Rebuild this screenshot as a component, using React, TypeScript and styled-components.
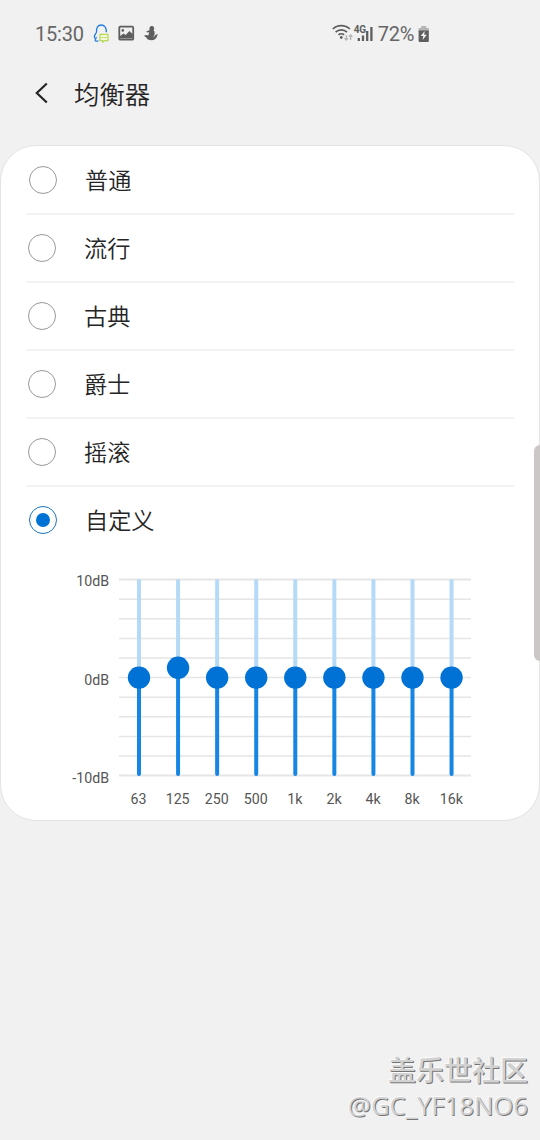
import React, { useState } from "react";
import styled, { createGlobalStyle } from "styled-components";

const GlobalStyle = createGlobalStyle`
  * {
    box-sizing: border-box;
  }
  body {
    margin: 0;
    background-color: #f1f1f1;
    font-family: Roboto, "Noto Sans CJK SC", sans-serif;
    color: #252525;
  }
`;

const Screen = styled.div`
  position: relative;
  display: flex;
  flex-direction: column;
  width: 540px;
  height: 1140px;
  overflow: hidden;
  background-color: #f1f1f1;
`;

const StatusBar = styled.div`
  display: flex;
  justify-content: space-between;
  align-items: center;
  height: 66px;
  padding: 2px 110px 0 35px;
  color: #666;
  font-size: 20px;
`;

const StatusGroup = styled.div`
  display: flex;
  align-items: center;
  height: 24px;
`;

const Clock = styled.span`
  width: 57.4px;
  letter-spacing: -0.2px;
`;

const Battery = styled.span`
  margin: 0 4px;
  letter-spacing: -0.3px;
`;

const Header = styled.header`
  display: flex;
  align-items: center;
  height: 79px;
  padding: 0 0 25px 33px;
`;

const BackButton = styled.button`
  display: flex;
  width: 41px;
  padding: 0;
  border: none;
  background: none;
  cursor: pointer;
`;

const Title = styled.h1`
  margin: 0;
  font-family: "Noto Sans CJK SC DemiLight", "Noto Sans CJK SC", sans-serif;
  font-size: 25.4px;
  font-weight: 350;
  line-height: 36px;
`;

const Card = styled.main`
  height: 676px;
  border: 1px solid #e3e3e3;
  border-radius: 36px;
  background-color: white;
`;

const PresetList = styled.div`
  padding: 1px 25px 0;
`;

const Preset = styled.button`
  display: flex;
  align-items: center;
  width: 100%;
  height: 68px;
  padding: 0 0 0 2px;
  border: none;
  border-bottom: 2px solid #f2f2f2;
  background: none;
  color: inherit;
  font-family: "Noto Sans CJK SC DemiLight", "Noto Sans CJK SC", sans-serif;
  font-size: 23.2px;
  font-weight: 350;
  cursor: pointer;

  &:first-child,
  &:last-child {
    padding-left: 3px;
  }
  &:last-child {
    border-color: transparent;
  }
`;

const PresetName = styled.span`
  padding-bottom: 2px;
`;

const Radio = styled.span<{ $checked: boolean }>`
  display: flex;
  align-items: center;
  justify-content: center;
  width: 28px;
  height: 28px;
  margin-right: 28px;
  border: 1.5px solid ${(props) => (props.$checked ? "#1a75bf" : "#999")};
  border-radius: 50%;

  &::after {
    content: "";
    width: 14px;
    height: 14px;
    border-radius: 50%;
    background-color: ${(props) => (props.$checked ? "#0072d6" : "transparent")};
  }
`;

const Equalizer = styled.section`
  display: grid;
  grid-template-columns: 108px 352px;
  column-gap: 10px;
  padding-top: 14px;
  color: #555;
  font-size: 14.2px;
`;

const Levels = styled.div`
  display: flex;
  flex-direction: column;
  justify-content: space-between;
  height: 213px;
  margin-top: 4px;
  text-align: right;
  line-height: 16px;
`;

const Chart = styled.svg`
  display: block;
`;

const Bands = styled.div`
  display: grid;
  grid-column: 2;
  grid-template-columns: repeat(9, 39.1px);
  line-height: 16px;
  margin-top: 5px;
  text-align: center;
`;

const ScrollHandle = styled.div`
  position: absolute;
  top: 445px;
  right: 0;
  width: 6px;
  height: 216px;
  border-radius: 6px 0 0 6px;
  background-color: #cbc7c7;
`;

const Watermark = styled.div`
  position: absolute;
  right: 12px;
  bottom: 17px;
  color: #d2d2d2;
  text-align: right;
  text-shadow: 1px 1px 0 #757575, -1px -1px 0 #fafafa;
`;

const Community = styled.div`
  font-family: "Noto Sans CJK SC", sans-serif;
  font-size: 28px;
  font-weight: 500;
  line-height: 40px;
`;

const Author = styled.div`
  font-family: "Open Sans", sans-serif;
  font-size: 25.7px;
  line-height: 34px;
`;

const presets = ["普通", "流行", "古典", "爵士", "摇滚", "自定义"];

const bands = [
  { label: "63", gain: 0 },
  { label: "125", gain: 1 },
  { label: "250", gain: 0 },
  { label: "500", gain: 0 },
  { label: "1k", gain: 0 },
  { label: "2k", gain: 0 },
  { label: "4k", gain: 0 },
  { label: "8k", gain: 0 },
  { label: "16k", gain: 0 },
];

const gridLines = [10, 8, 6, 4, 2, 0, -2, -4, -6, -8, -10];

const toY = (gain: number) => 108.6 - gain * 9.8;

const NotificationIcons = () => (
  <svg width="68" height="24" viewBox="0 0 68 24">
    <path
      d="M6.5 18.7c-1.5.8-3.8.5-3.3-1l.8-1.7c-1.2.5-2.2-.4-1.4-2.4l1.9-3.4C4.1 5.5 6 3 9.2 3s5.4 2.5 5.2 7.2"
      fill="none"
      stroke="#267de0"
      strokeWidth="1.3"
    />
    <path
      d="M8 12.4h8v6.2h-3.5l-1.7 1.6v-1.6H8z"
      fill="#f2f8d8"
      stroke="#b8d85a"
      strokeWidth="1.3"
      strokeLinejoin="round"
    />
    <path d="M9.6 15.5h1m1 0h1m1 0h1" stroke="#9bc52b" strokeWidth="1.2" />
    <rect x="27.3" y="4.7" width="13.9" height="13" rx="1" fill="none" stroke="#5e5e5e" strokeWidth="1.8" />
    <circle cx="30.8" cy="8.4" r="1.3" fill="#5e5e5e" />
    <path d="M27.9 16.5v-2.3l3.5-2.7 2.3 1.5 3.7-4 3.4 3.2v4.3z" fill="#5e5e5e" />
    <circle cx="59.8" cy="6.4" r="2.4" fill="#5e5e5e" />
    <path
      d="M57.8 7.5c-1 1.2-2 1.6-3.5 1.8l.8 1.2 2.2-.2-1 3.2c-.8-.7-2.4-.8-4 .1.1 1.2 1.1 1.4 1.7 1.5.8 2.1 2.7 3.2 5.3 3.2 3.4 0 5.3-2 5.9-4.5l.6-1.7-2.8 1.1c-.5 1.3-1 1.9-1.7 2.4l1.2-3.2c.6-2-.3-3.9-1.6-4.9z"
      fill="#5e5e5e"
    />
  </svg>
);

const SignalIcons = () => (
  <svg width="42" height="24" viewBox="0 0 42 24">
    <g fill="none" stroke="#5e5e5e" strokeWidth="1.7">
      <path d="M.8 7c4.6-4.5 12.4-4.5 17 0M3.6 10.1c3-3.1 8.4-3.1 11.4 0M6.5 12.9c1.5-1.5 4.1-1.5 5.6 0" />
    </g>
    <circle cx="9.3" cy="15.5" r="1.4" fill="#5e5e5e" />
    <path d="M14.3 13v5m-1.8-1.8 1.8 2 1.8-2M18.6 18v-5m-1.8 1.8 1.8-2 1.8 2" fill="none" stroke="#b2b2b2" strokeWidth="1.2" />
    <text x="21.8" y="11.3" fill="#5e5e5e" fontSize="10" fontWeight="700" letterSpacing="-0.4">
      4G
    </text>
    <path d="M26.8 19v-3M31 19v-5.5M35.2 19V9M39.4 19V5" stroke="#5e5e5e" strokeWidth="2.3" />
  </svg>
);

const BatteryIcon = () => (
  <svg width="12" height="18" viewBox="0 0 12 18">
    <path d="M3.2 1h5v2h2.6v4H.6V3h2.6z" fill="#b5b5b5" />
    <path d="M.6 5.5h10.2V16a1 1 0 0 1-1 1H1.6a1 1 0 0 1-1-1z" fill="#5e5e5e" />
    <path d="m6.7 6-4 5h2.6l-.7 4L8.8 9.7H6.2z" fill="#f5f5f5" />
  </svg>
);

const App: React.FunctionComponent = () => {
  const [selected, setSelected] = useState("自定义");

  return (
    <>
      <GlobalStyle />
      <Screen>
        <StatusBar>
          <StatusGroup>
            <Clock>15:30</Clock>
            <NotificationIcons />
          </StatusGroup>
          <StatusGroup>
            <SignalIcons />
            <Battery>72%</Battery>
            <BatteryIcon />
          </StatusGroup>
        </StatusBar>
        <Header>
          <BackButton aria-label="返回">
            <svg width="18" height="24" viewBox="0 0 18 24">
              <path d="M13.8 2.5 3.8 12l10 9.5" fill="none" stroke="#252525" strokeWidth="2.2" />
            </svg>
          </BackButton>
          <Title>均衡器</Title>
        </Header>
        <Card>
          <PresetList>
            {presets.map((name) => (
              <Preset key={name} onClick={() => setSelected(name)}>
                <Radio $checked={selected === name} />
                <PresetName>{name}</PresetName>
              </Preset>
            ))}
          </PresetList>
          <Equalizer>
            <Levels>
              <span>10dB</span>
              <span>0dB</span>
              <span>-10dB</span>
            </Levels>
            <Chart width="352" height="216" viewBox="0 0 352 216">
              {gridLines.map((gain) => (
                <path
                  key={gain}
                  d={`M0 ${toY(gain)}h352`}
                  stroke="#e5e5e5"
                  strokeWidth={Math.abs(gain) === 10 ? 2 : 1.5}
                />
              ))}
              {bands.map(({ label, gain }, index) => {
                const x = 20 + index * 39.07;
                return (
                  <g key={label} strokeWidth="4" strokeLinecap="round">
                    <path d={`M${x} 12V${toY(gain)}`} stroke="#b5daf8" />
                    <path d={`M${x} ${toY(gain)}V205`} stroke="#1686e4" />
                    <circle cx={x} cy={toY(gain)} r="11.2" fill="#0072d6" />
                  </g>
                );
              })}
            </Chart>
            <Bands>
              {bands.map(({ label }) => (
                <span key={label}>{label}</span>
              ))}
            </Bands>
          </Equalizer>
        </Card>
        <ScrollHandle />
        <Watermark>
          <Community>盖乐世社区</Community>
          <Author>@GC_YF18NO6</Author>
        </Watermark>
      </Screen>
    </>
  );
};

export default App;
